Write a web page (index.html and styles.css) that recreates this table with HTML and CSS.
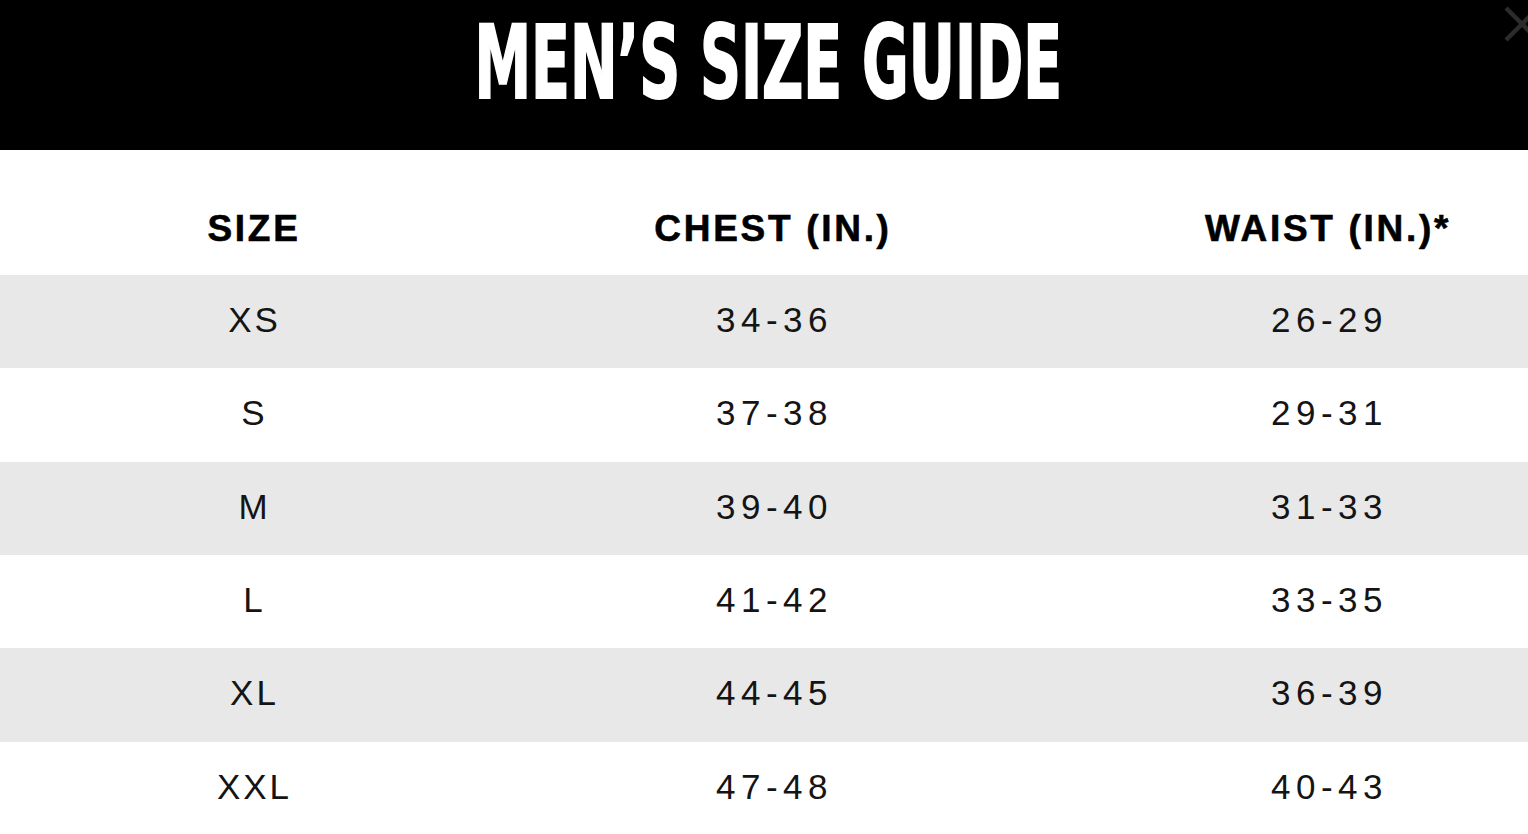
FILE: index.html
```html
<!DOCTYPE html>
<html lang="en">
<head>
<meta charset="utf-8">
<title>Men's Size Guide</title>
<link rel="stylesheet" href="styles.css">
</head>
<body>
<div class="modal">
  <header class="banner">
    <h1 class="title">MEN’S SIZE GUIDE</h1>
    <button class="close" aria-label="Close">
      <svg width="40" height="40" viewBox="0 0 40 40"><path d="M4 4 L36 36 M36 4 L4 36" stroke="#2b2b2b" stroke-width="4.5" fill="none"/></svg>
    </button>
  </header>
  <div class="table">
    <div class="row head"><div class="cell">SIZE</div><div class="cell">CHEST (IN.)</div><div class="cell">WAIST (IN.)*</div></div>
    <div class="row alt"><div class="cell size">XS</div><div class="cell">34-36</div><div class="cell">26-29</div></div>
    <div class="row"><div class="cell size">S</div><div class="cell">37-38</div><div class="cell">29-31</div></div>
    <div class="row alt"><div class="cell size">M</div><div class="cell">39-40</div><div class="cell">31-33</div></div>
    <div class="row"><div class="cell size">L</div><div class="cell">41-42</div><div class="cell">33-35</div></div>
    <div class="row alt"><div class="cell size">XL</div><div class="cell">44-45</div><div class="cell">36-39</div></div>
    <div class="row"><div class="cell size">XXL</div><div class="cell">47-48</div><div class="cell">40-43</div></div>
  </div>
</div>
</body>
</html>
```
FILE: styles.css
```css
html, body { margin: 0; padding: 0; background: #fff; overflow: hidden; }
.modal { width: 1528px; overflow: hidden; font-family: "Liberation Sans", Arial, sans-serif; color: #111; }
.banner { position: relative; height: 150px; background: #000; display: flex; justify-content: center; align-items: flex-start; }
.title { margin: 0; padding-top: 12px; padding-left: 14px; color: #fff; font-family: "DejaVu Sans Condensed", "Liberation Sans Narrow", sans-serif; font-weight: 700; font-size: 102px; line-height: 102px; transform: scaleX(0.62); transform-origin: center top; white-space: nowrap; letter-spacing: 0; -webkit-text-stroke: 2px #fff; }
.close { position: absolute; top: 4px; right: -14px; background: none; border: 0; padding: 0; }
.table { width: 1616px; }
.row { display: grid; grid-template-columns: 506px 532px 578px; height: 93.33px; align-items: center; }
.row.alt { background: #e8e8e8; }
.row.head { height: 125px; align-items: end; }
.cell { text-align: center; font-size: 35px; letter-spacing: 5.5px; text-indent: 5px; color: #141414; padding-bottom: 3px; }
.cell.size { letter-spacing: 3px; text-indent: 3px; }
.head .cell { font-weight: 700; font-size: 37px; letter-spacing: 2.7px; text-indent: 2px; color: #000; padding-bottom: 25px; -webkit-text-stroke: 0.6px #000; }
```
